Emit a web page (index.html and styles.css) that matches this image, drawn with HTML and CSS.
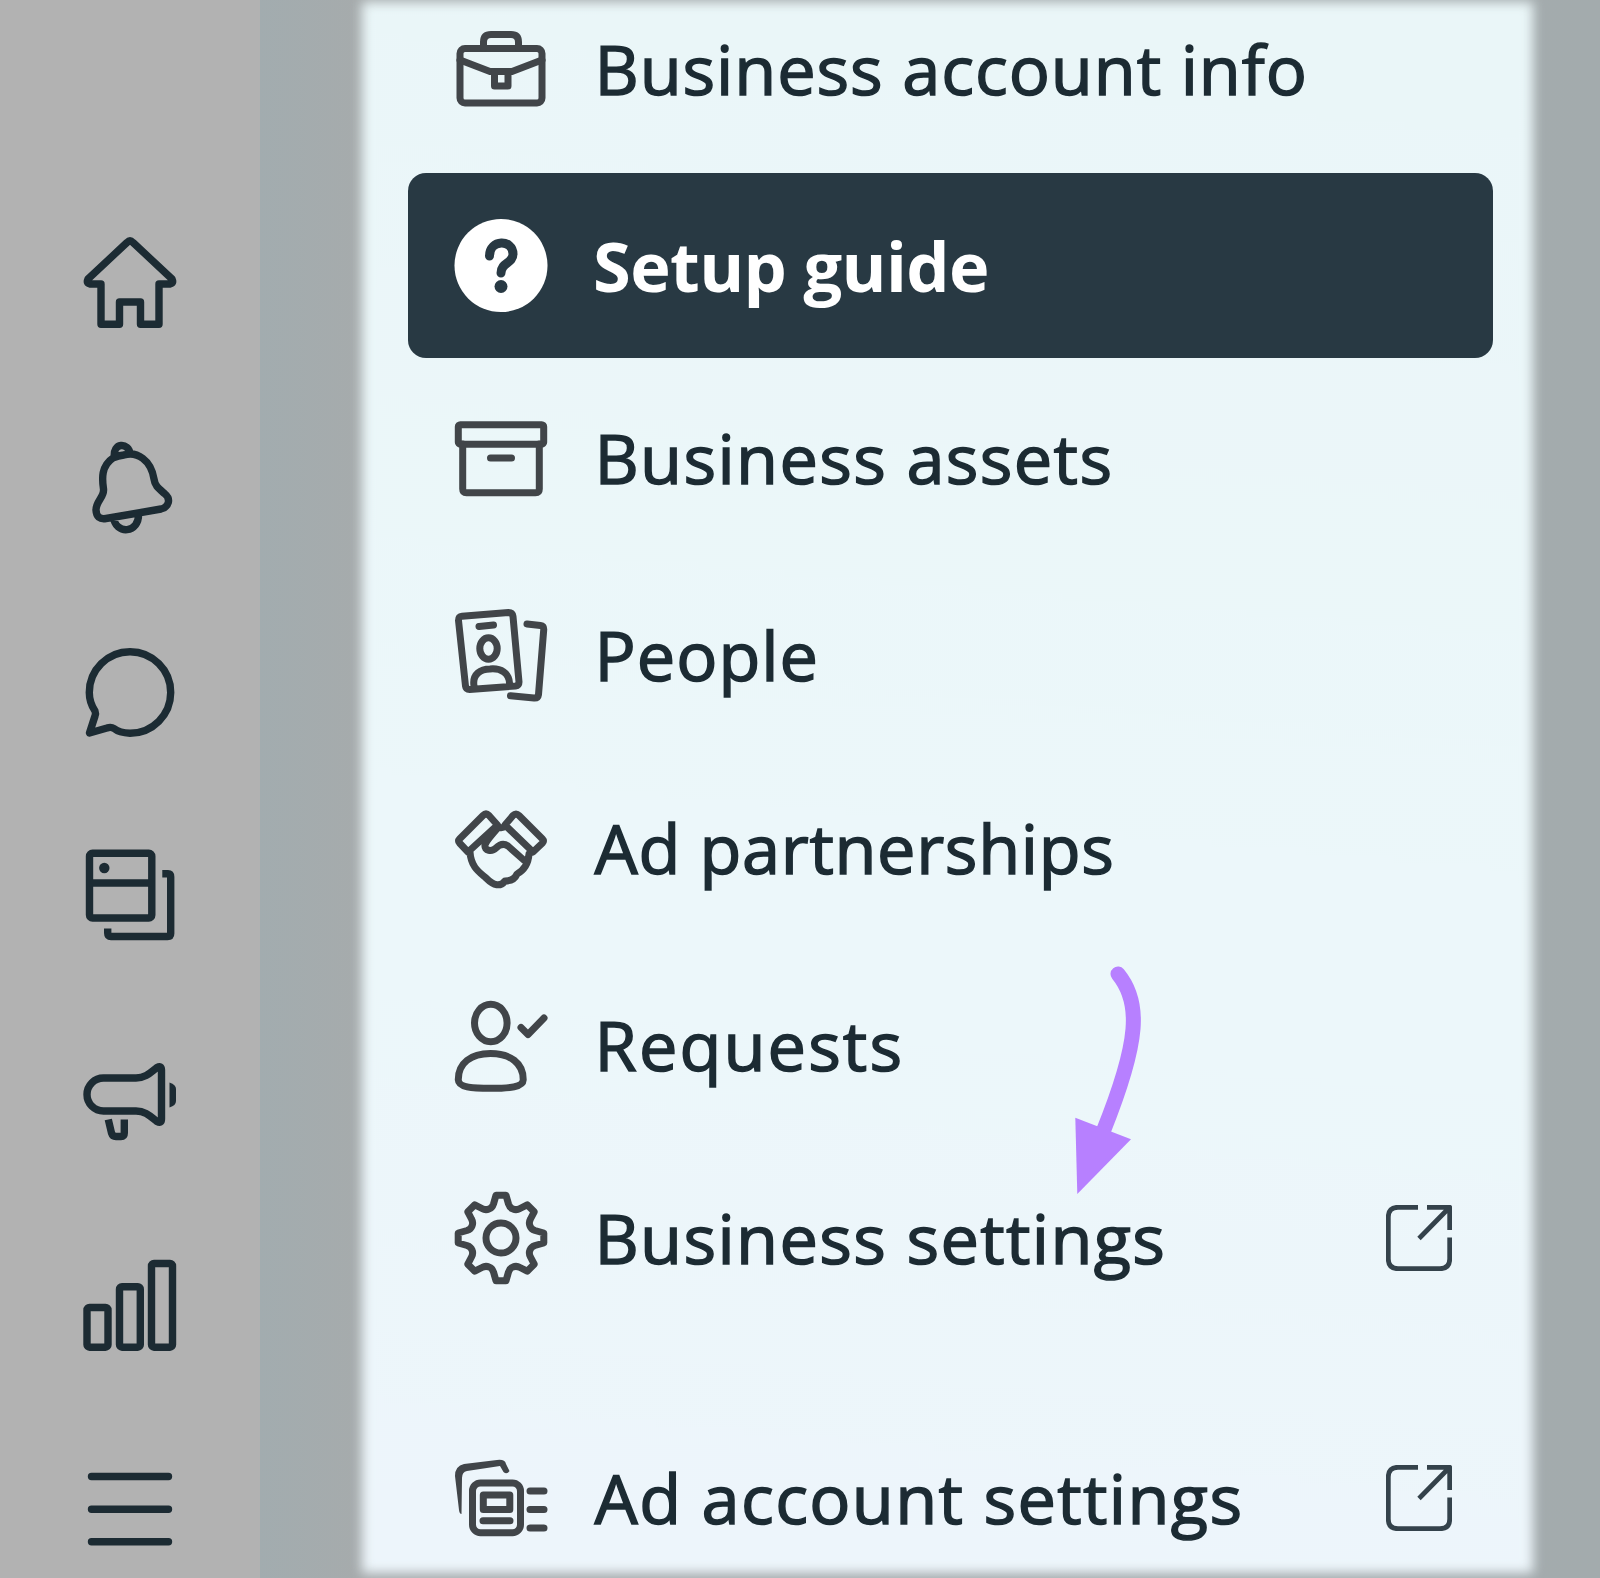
FILE: index.html
```
<!DOCTYPE html>
<html lang="en">
<head>
    <meta charset="UTF-8">
    <meta name="viewport" content="width=device-width, initial-scale=1.0">
    <title>Business settings</title>
    <link rel="stylesheet" href="styles.css">
</head>
<body>

<div class="page">
    <nav class="sidebar">
        <svg class="icon" viewBox="0 0 92 92"><path d="M43 5.500Q46 2.500 49 5.500L88 42Q90 46.500 86 47H75V87.300H56.500V65H35.500V87.300H17V47H6Q2 46.500 4 42Z"/></svg>
        <svg class="icon" viewBox="0 0 92 92"><path d="M29 17C17 25 18 38 19.500 48C20.500 56 12 60 12 69Q12.500 79 22 77.500L77 68C85 66 87 58 81 53C74 47 71 45 70 38C67 19 53 10 40 14Q34 14.500 29 17ZM30.500 17C28 1 45 1 46 13M29.500 76C31 94 56 93 54.500 72"/></svg>
        <svg class="icon" viewBox="0 0 92 92"><path d="M11 65C7 59 5.300 53 5.300 46.500A40.700 40.700 0 1 1 46 87.200C38 87 33 85 30 82.500Q27 80.500 23 82L5.500 87L11 70Q12 67.500 11 65Z"/></svg>
        <svg class="icon" viewBox="0 0 92 92"><rect x="5.500" y="3.300" width="62.300" height="64.700" rx="3"/><path d="M5.500 33H68M78.300 23.800H84Q86.700 23.800 86.700 27V83.500Q86.700 86.500 83.500 86.500H27Q23.700 86.500 23.700 83V78.500"/><circle class="dot" cx="20.300" cy="18" r="5.200"/></svg>
        <svg class="icon" viewBox="0 0 92 92"><path d="M19.500 23H52C62 23 67 17 73 12.500Q77.500 10 77.500 15V64Q77.500 69 73 66.500C67 62 62 56 52 56H19.500A16.500 16.500 0 0 1 19.500 23ZM24.300 64.500L27.500 78Q28.500 81.500 32 81.500H37Q40.300 81.500 40.300 78V64.500"/><path class="dot" d="M85.500 27.500Q92 29.500 92 34V46Q92 50.500 85.500 52.500Z"/></svg>
        <svg class="icon" viewBox="0 0 92 92"><rect x="3" y="48.500" width="21" height="39.700" rx="2.500"/><rect x="35.500" y="27.700" width="20.800" height="60.500" rx="2.500"/><rect x="67.500" y="4.500" width="21" height="83.700" rx="2.500"/></svg>
        <svg class="icon" viewBox="0 0 92 92"><path d="M7.500 13.500H84.500M7.500 46.300H84.500M7.500 78.700H84.500"/></svg>
    </nav>

    <main class="content">
        <div class="panel">
            <div class="item first">
                <svg class="icon" viewBox="0 0 92 92"><rect x="5" y="25.500" width="82" height="54.500" rx="5"/><path d="M28.500 25V19Q28.500 11.500 36 11.500H56Q63.500 11.500 63.500 19V25M5 37L35 48.500H57L87 37"/><rect x="39.500" y="48.500" width="13.500" height="14.500"/></svg>
                <span class="label">Business account info</span>
            </div>
            <div class="item active">
                <svg class="icon" viewBox="0 0 92 92"><circle class="disc" cx="46" cy="45.500" r="46.500"/><path class="mark" d="M34.500 36C34.500 19 58 19 58 34C58 44 46 42 46 53"/><circle class="mark-dot" cx="46" cy="66.500" r="6.500"/></svg>
                <span class="label">Setup guide</span>
            </div>
            <div class="item assets">
                <svg class="icon" viewBox="0 0 92 92"><rect x="3.300" y="12.700" width="85.400" height="19.500" rx="2"/><path d="M7.700 32V77Q7.700 80.700 11.500 80.700H80.500Q84.300 80.700 84.300 77V32M35.500 46H56.500"/></svg>
                <span class="label">Business assets</span>
            </div>
            <div class="item people">
                <svg class="icon" viewBox="0 0 92 92"><path d="M7 7.200L53.500 3.500Q57.500 3.500 58 7.500L64 73Q64 76.500 60.500 77L14.500 80.500Q11 80.500 10.500 77L3.500 11.500Q3.500 7.500 7 7.200ZM24 17.500L38.500 16M19 77C17 65 26 60 35 60C46 59 54 64 54.500 74"/><ellipse cx="33.500" cy="39.500" rx="8.700" ry="10.700"/><path d="M72 15L85.500 16.500Q89 17 88.700 21L83.500 85.500Q83 89.300 79 89L55.500 86.800"/></svg>
                <span class="label">People</span>
            </div>
            <div class="item partners">
                <svg class="icon" viewBox="0 0 92 92"><path d="M28 13.500Q31 10.500 34 13.500L42.500 23L13 50L4.500 41Q2.500 39 4.500 37ZM64 13.500Q61 10.500 58 13.500L50 23L78 50L87.500 41Q89.500 39 87.500 37ZM42 24Q46 27.500 51 24M42.500 26C37 33 31 39 30 43C29 49 37 50 41 46Q47 40 53 44L71 60M15 50C16 65 24 70 31 76Q43 88 50 79Q59 79 62 72Q73 66 74 52"/></svg>
                <span class="label">Ad partnerships</span>
            </div>
            <div class="item requests">
                <svg class="icon" viewBox="0 0 92 92"><ellipse cx="35.800" cy="24" rx="16.300" ry="18.700"/><path d="M3.300 81C3 64 16 54.500 35.500 54.500S68.500 64 68.200 81C68 88 55 89.300 35.500 89.300S3.500 88 3.300 81ZM66 28.500L73 35.500L89 19"/></svg>
                <span class="label">Requests</span>
            </div>
            <div class="item settings">
                <svg class="icon" viewBox="0 0 92 92"><path d="M41 3.200H51L53.500 12Q54.800 16 58 17Q61.500 18.500 65 16.500L72.200 12.800L79.200 19.800L75.500 27Q73.500 30.500 75 34Q76 37.200 80 38.500L88.800 41V51L80 53.500Q76 54.800 75 58Q73.500 61.500 75.500 65L79.200 72.200L72.200 79.200L65 75.500Q61.500 73.500 58 75Q54.800 76 53.500 80L51 88.800H41L38.500 80Q37.200 76 34 75Q30.500 73.500 27 75.500L19.800 79.200L12.800 72.200L16.500 65Q18.500 61.500 17 58Q16 54.800 12 53.500L3.200 51V41L12 38.500Q16 37.200 17 34Q18.500 30.500 16.500 27L12.800 19.800L19.800 12.800L27 16.500Q30.500 18.500 34 17Q37.200 16 38.500 12Z"/><circle cx="46" cy="46" r="15"/></svg>
                <span class="label">Business settings</span>
                <svg class="external" viewBox="0 0 66 66"><path d="M32 2.300H12Q2.300 2.300 2.300 12V54Q2.300 63.700 12 63.700H54Q63.700 63.700 63.700 54V32.500M41 2.300H63.700V25M63.700 2.300L33 33.500"/></svg>
            </div>
            <div class="item account">
                <svg class="icon" viewBox="0 0 92 92"><path class="dot" d="M0 24Q0 14 9 12L42 8Q50 7 51 12L54.500 19Q52 23 48.500 20L45 14L12 19Q7 20 7 26L6.500 62Q4.500 62 4 58Z"/><rect x="17.500" y="31" width="48" height="49.700" rx="8"/><rect x="28.300" y="43" width="26.500" height="14.500"/><path d="M28 68.700H55M75 39H89M75 57.500H89M75 76H89"/></svg>
                <span class="label">Ad account settings</span>
                <svg class="external" viewBox="0 0 66 66"><path d="M32 2.300H12Q2.300 2.300 2.300 12V54Q2.300 63.700 12 63.700H54Q63.700 63.700 63.700 54V32.500M41 2.300H63.700V25M63.700 2.300L33 33.500"/></svg>
            </div>
        </div>
    </main>

    <!-- arrow pointing at Business settings -->
    <svg class="arrow" viewBox="0 0 90 240"><path class="shaft" d="M58 14C81 42 80 80 43 172"/><path class="head" d="M15.300 157.700L71 179.300L17.300 234Z"/></svg>
</div>

</body>
</html>
```
FILE: styles.css
```
* {
    box-sizing: border-box;
}
body {
    margin: 0;
    font-family: "Open Sans", "Noto Sans", sans-serif;
    background-color: #a3acae;
}
.page {
    position: relative;
    display: flex;
    width: 1600px;
    height: 1578px;
    overflow: hidden;
}
.sidebar {
    display: flex;
    flex-direction: column;
    align-items: center;
    gap: 112.4px;
    width: 260px;
    padding-top: 237px;
    background-color: #b2b2b2;
}
.icon {
    flex: none;
    width: 92px;
    height: 92px;
    overflow: visible;
    fill: none;
    stroke: #414549;
    stroke-width: 7;
    stroke-linecap: round;
    stroke-linejoin: round;
}
.sidebar .icon {
    stroke: #1c2b33;
    stroke-width: 7.4;
    stroke-linecap: butt;
}
.sidebar .icon:last-child {
    stroke-linecap: round;
}
.sidebar .dot {
    fill: #1c2b33;
    stroke: none;
}
.content {
    flex: 1;
    padding: 14px 79px 0 114px;
    background: linear-gradient(90deg, #a2acaf, #a6abac 100px, #a3abad);
}
.panel {
    display: flex;
    flex-direction: column;
    position: relative;
    height: 1547px;
    padding: 0 28px 0 34px;
    isolation: isolate;
}
/* soft lit area around the menu */
.panel::before {
    content: "";
    position: absolute;
    inset: -12px;
    z-index: -1;
    background: linear-gradient(185deg, #eaf6f8, #ecf7fa 60%, #edf5fb);
    filter: blur(6px);
}
.item {
    display: flex;
    flex: none;
    align-items: center;
    height: 185px;
    padding: 0 41px 0 47px;
    border-radius: 18px;
}
.first {
    margin-top: -38px;
}
.active {
    margin-top: 12px;
    background-color: #283943;
}
.assets {
    margin-top: 7px;
}
.people {
    margin-top: 12px;
}
.partners {
    margin-top: 8px;
}
.requests {
    margin-top: 12px;
}
.settings {
    margin-top: 8px;
}
.account {
    margin-top: 75px;
}
.active .disc {
    fill: #fff;
    stroke: none;
}
.active .mark {
    stroke: #283943;
    stroke-width: 9;
}
.active .mark-dot {
    fill: #283943;
    stroke: none;
}
.account .dot {
    fill: #414549;
    stroke: none;
}
.label {
    margin-left: 47.5px;
    font-size: 68.5px;
    line-height: 92px;
    letter-spacing: 1.35px;
    white-space: nowrap;
    color: #1c2b33;
    -webkit-text-stroke: 1.5px #1c2b33;
}
.first .label {
    letter-spacing: 0.9px;
}
.people .label {
    letter-spacing: 1px;
}
.partners .label {
    letter-spacing: 0.65px;
}
.requests .label {
    letter-spacing: 2.1px;
}
.active .label {
    margin-left: 46px;
    font-weight: 700;
    letter-spacing: -0.6px;
    color: #fff;
    -webkit-text-stroke: 0;
}
.external {
    width: 66px;
    height: 66px;
    margin-left: auto;
    fill: none;
    stroke: #34424b;
    stroke-width: 4.8;
    stroke-linejoin: round;
}
.arrow {
    position: absolute;
    left: 1060px;
    top: 960px;
    width: 90px;
    height: 240px;
}
.shaft {
    fill: none;
    stroke: #b780ff;
    stroke-width: 15;
    stroke-linecap: round;
}
.head {
    fill: #b780ff;
}
```
